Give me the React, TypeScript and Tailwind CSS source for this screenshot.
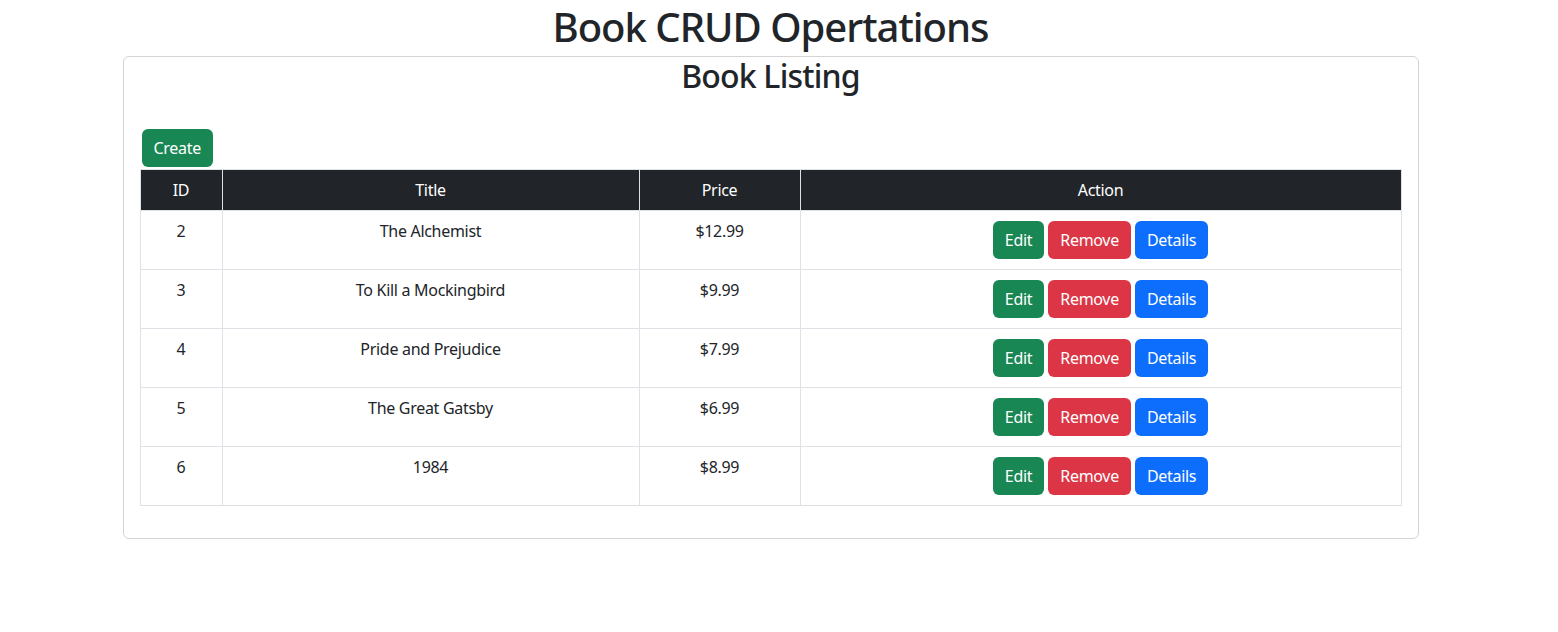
const books = [
  { id: 2, title: 'The Alchemist', price: '$12.99' },
  { id: 3, title: 'To Kill a Mockingbird', price: '$9.99' },
  { id: 4, title: 'Pride and Prejudice', price: '$7.99' },
  { id: 5, title: 'The Great Gatsby', price: '$6.99' },
  { id: 6, title: '1984', price: '$8.99' },
]

export default function App() {
  return (
    <div className="min-h-[632px] w-[1541px] bg-white text-[#212529] font-['Noto_Sans',sans-serif] text-base">
      <h1 className="text-center text-[40px] leading-[54px] font-medium tracking-[-1px] mb-[2px]">Book CRUD Opertations</h1>

      <div className="mx-auto w-[1296px] border border-[#d4d4d5] rounded-md px-4 pb-4">
        <h2 className="text-center text-[32px] leading-[38px] font-medium tracking-[-0.8px]">Book Listing</h2>

        <div className="mt-[34px] mb-[2px]">
          <button className="ml-[2px] h-[38px] px-3 rounded-md bg-[#198754] text-white leading-6 tracking-[-0.3px]">Create</button>
        </div>

        <table className="w-full border-collapse mb-4 text-center tracking-[-0.3px]">
          <thead>
            <tr className="bg-[#212529] text-white">
              <th className="w-[82px] border border-[#dee2e6] px-2 py-2 font-normal leading-6">ID</th>
              <th className="w-[417px] border border-[#dee2e6] px-2 py-2 font-normal leading-6">Title</th>
              <th className="w-[161px] border border-[#dee2e6] px-2 py-2 font-normal leading-6">Price</th>
              <th className="border border-[#dee2e6] px-2 py-2 font-normal leading-6">Action</th>
            </tr>
          </thead>
          <tbody>
            {books.map((b) => (
              <tr key={b.id}>
                <td className="border border-[#dee2e6] px-2 pt-2 pb-[18px] align-top leading-6">{b.id}</td>
                <td className="border border-[#dee2e6] px-2 pt-2 pb-[18px] align-top leading-6">{b.title}</td>
                <td className="border border-[#dee2e6] px-2 pt-2 pb-[18px] align-top leading-6">{b.price}</td>
                <td className="border border-[#dee2e6] px-2 py-[10px] align-top">
                  <div className="flex justify-center gap-1">
                    <button className="h-[38px] px-3 rounded-md bg-[#198754] text-white leading-6">Edit</button>
                    <button className="h-[38px] px-3 rounded-md bg-[#dc3545] text-white leading-6">Remove</button>
                    <button className="h-[38px] px-3 rounded-md bg-[#0d6efd] text-white leading-6">Details</button>
                  </div>
                </td>
              </tr>
            ))}
          </tbody>
        </table>
      </div>
    </div>
  )
}
